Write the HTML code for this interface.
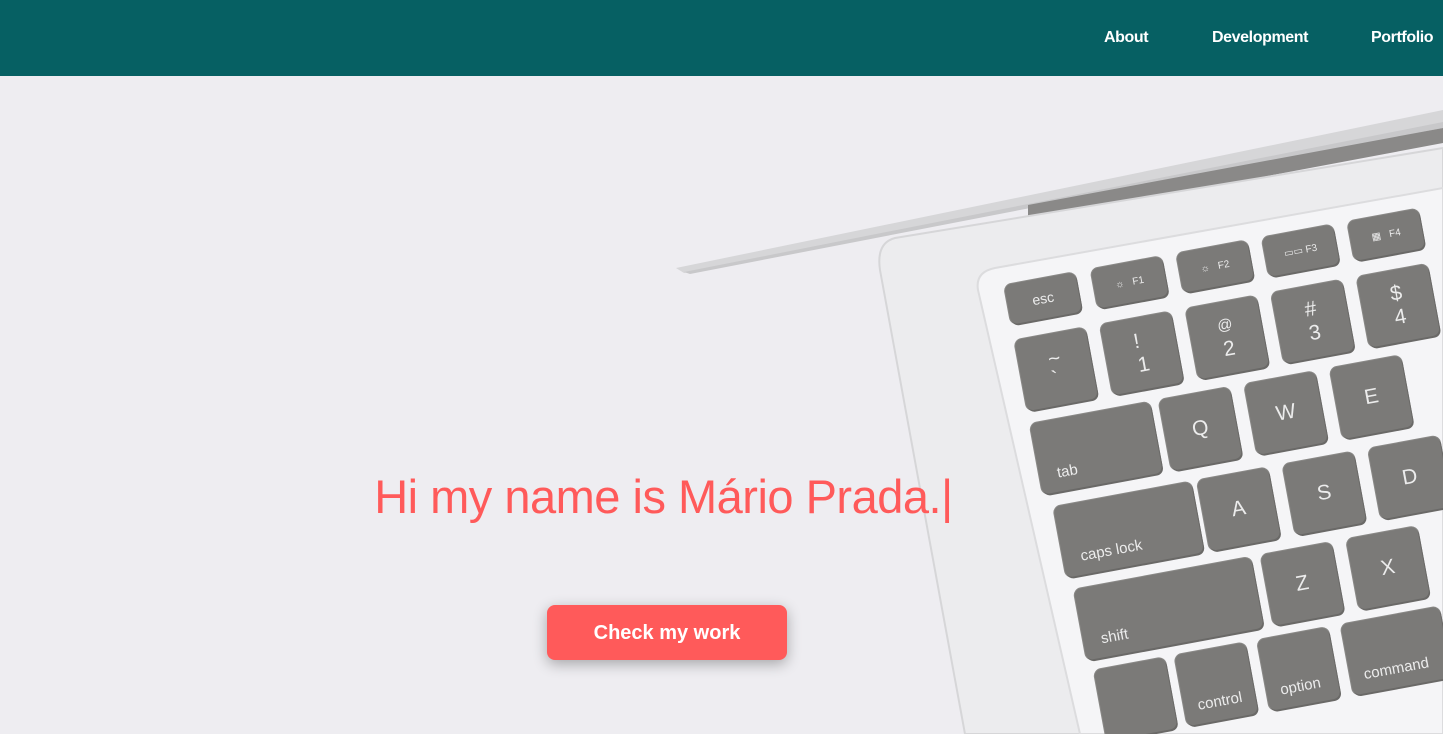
<!DOCTYPE html>
<html><head><meta charset="utf-8">
<style>
*{margin:0;padding:0;box-sizing:border-box}
html,body{width:1443px;height:734px;overflow:hidden}
body{background:#eeedf1;font-family:"Liberation Sans",sans-serif;position:relative}
.nav{position:absolute;left:0;top:0;width:1443px;height:76px;background:#066063;z-index:5}
.nav a{position:absolute;top:29px;color:#fff;font-weight:bold;font-size:16px;letter-spacing:-0.4px;text-decoration:none}
.kb{position:absolute;left:1045px;top:298px;width:0;height:0;transform:rotate(-10.5deg);transform-origin:0 0}
.k{position:absolute;background:#7b7a78;border-radius:7px;color:#ececec;font-size:21px;display:flex;align-items:center;justify-content:center;box-shadow:1px 2px 0 #6a6967,0 0 0 1px #8a8987}
.s{font-size:15px;justify-content:flex-start;align-items:flex-end;padding:0 0 10px 18px}
.f{font-size:10px}
h1{position:absolute;left:0;width:1327px;text-align:center;top:469px;color:#ff5a5a;font-weight:normal;font-size:47px;letter-spacing:-0.5px;z-index:3}
.btn{position:absolute;left:547px;top:605px;width:240px;height:55px;background:#ff5a5a;border-radius:8px;color:#fff;font-weight:bold;font-size:20px;text-align:center;line-height:56px;box-shadow:0 4px 14px rgba(0,0,0,.3);z-index:3}
</style></head><body>
<div class="nav">
<a style="left:1104px">About</a>
<a style="left:1212px">Development</a>
<a style="left:1371px">Portfolio</a>
</div>
<svg style="position:absolute;left:0;top:0" width="1443" height="734">
<polygon points="676,268 1443,110 1443,125 684,273" fill="#d6d6d8"/>
<polygon points="684,272 1443,122 1443,128 690,274" fill="#c8c8ca"/>
<polygon points="1028,205 1443,128 1443,143 1028,221" fill="#8a8988"/>
<path d="M895,238 L1443,148 L1443,734 L965,734 L880,270 Q876,243 895,238 Z" fill="#ececee" stroke="#d6d6d8" stroke-width="2"/>
<path d="M995,268 L1443,188 L1443,734 L1080,734 L978,290 Q975,272 995,268 Z" fill="#f5f5f7" stroke="#dcdcde" stroke-width="2"/>
</svg>
<div class="kb">
<div class="k" style="left:-38px;top:-20px;width:72px;height:40px;font-size:14px">esc</div>
<div class="k f" style="left:50px;top:-20px;width:72px;height:40px">☼ &nbsp; F1</div>
<div class="k f" style="left:137px;top:-20px;width:72px;height:40px">☼ &nbsp; F2</div>
<div class="k f" style="left:224px;top:-20px;width:72px;height:40px">▭▭ F3</div>
<div class="k f" style="left:311px;top:-20px;width:72px;height:40px">▦ &nbsp; F4</div>
<div class="k" style="left:-38px;top:36px;width:72px;height:72px;flex-direction:column;line-height:20px">~<br>`</div>
<div class="k" style="left:49px;top:36px;width:72px;height:72px;flex-direction:column;line-height:24px">!<br>1</div>
<div class="k" style="left:136px;top:36px;width:72px;height:72px;flex-direction:column;line-height:24px"><span style="font-size:15px">@</span>2</div>
<div class="k" style="left:223px;top:36px;width:72px;height:72px;flex-direction:column;line-height:24px">#<br>3</div>
<div class="k" style="left:310px;top:36px;width:72px;height:72px;flex-direction:column;line-height:24px">$<br>4</div>
<div class="k s" style="left:-38px;top:121px;width:122px;height:72px">tab</div>
<div class="k" style="left:93px;top:121px;width:72px;height:72px">Q</div>
<div class="k" style="left:180px;top:121px;width:72px;height:72px">W</div>
<div class="k" style="left:267px;top:121px;width:72px;height:72px">E</div>
<div class="k s" style="left:-30px;top:207px;width:140px;height:72px">caps lock</div>
<div class="k" style="left:116px;top:207px;width:72px;height:72px">A</div>
<div class="k" style="left:203px;top:207px;width:72px;height:72px">S</div>
<div class="k" style="left:290px;top:207px;width:72px;height:72px">D</div>
<div class="k s" style="left:-25px;top:292px;width:180px;height:72px">shift</div>
<div class="k" style="left:165px;top:292px;width:72px;height:72px">Z</div>
<div class="k" style="left:252px;top:292px;width:72px;height:72px">X</div>
<div class="k" style="left:-20px;top:375px;width:72px;height:72px"></div>
<div class="k s" style="left:62px;top:375px;width:72px;height:72px;padding-left:14px">control</div>
<div class="k s" style="left:146px;top:375px;width:72px;height:72px;padding-left:14px">option</div>
<div class="k s" style="left:231px;top:375px;width:100px;height:72px;padding-left:14px">command</div>
</div>
<h1>Hi my name is Mário Prada.|</h1>
<div class="btn">Check my work</div>
</body></html>
